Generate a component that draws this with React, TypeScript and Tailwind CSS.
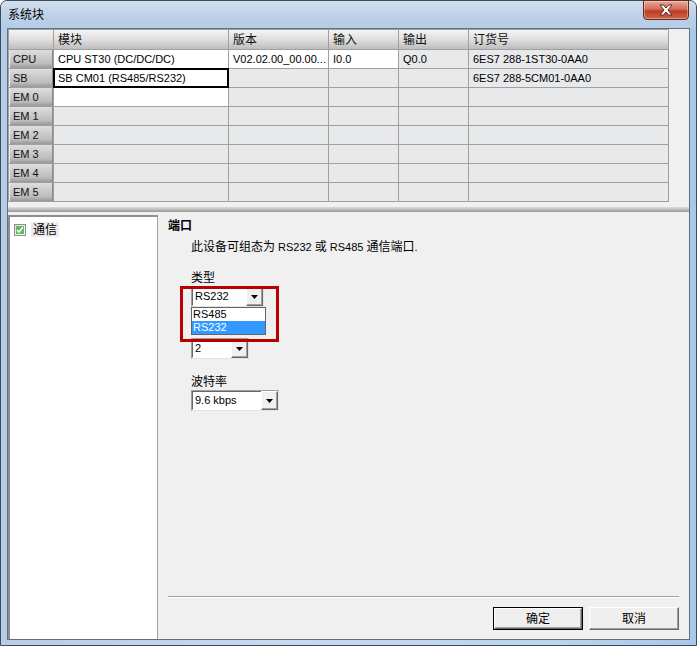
import React from "react";

const FONT = "font-['Liberation_Sans','Noto_Sans_CJK_SC',sans-serif]";

// CJK text is a little larger than the latin UI font
function Z({ children, className = "" }: { children: React.ReactNode; className?: string }) {
  return <span className={`text-[12px] ${className}`}>{children}</span>;
}

const COLS = ["模块", "版本", "输入", "输出", "订货号"];

type Row = { head: string; cells: string[]; white: boolean[]; selected?: number };

const ROWS: Row[] = [
  {
    head: "CPU",
    cells: ["CPU ST30 (DC/DC/DC)", "V02.02.00_00.00...", "I0.0", "Q0.0", "6ES7 288-1ST30-0AA0"],
    white: [true, true, true, false, false],
  },
  {
    head: "SB",
    cells: ["SB CM01 (RS485/RS232)", "", "", "", "6ES7 288-5CM01-0AA0"],
    white: [true, false, false, false, false],
    selected: 0,
  },
  { head: "EM 0", cells: ["", "", "", "", ""], white: [true, false, false, false, false] },
  { head: "EM 1", cells: ["", "", "", "", ""], white: [false, false, false, false, false] },
  { head: "EM 2", cells: ["", "", "", "", ""], white: [false, false, false, false, false] },
  { head: "EM 3", cells: ["", "", "", "", ""], white: [false, false, false, false, false] },
  { head: "EM 4", cells: ["", "", "", "", ""], white: [false, false, false, false, false] },
  { head: "EM 5", cells: ["", "", "", "", ""], white: [false, false, false, false, false] },
];

function ModuleTable() {
  return (
    <div className="grid grid-cols-[44px_174px_99px_69px_69px_199px] gap-px bg-[#a0a0a0] p-px w-[661px]">
      <div className="h-[19px] bg-[linear-gradient(#f4f4f4,#dcdcdc_55%,#bdbdbd)]" />
      {COLS.map((c) => (
        <div
          key={c}
          className="h-[19px] flex items-center pl-[4px] bg-[linear-gradient(#f4f4f4,#dcdcdc_55%,#bdbdbd)] text-[#111]"
        >
          <Z>{c}</Z>
        </div>
      ))}
      {ROWS.map((r) => (
        <React.Fragment key={r.head}>
          <div className="h-[18px] flex items-center pl-[4px] bg-[linear-gradient(#dedede,#c9c9c9_45%,#bdbdbd_75%,#989898)] shadow-[inset_1px_0_0_#ececec,inset_-1px_0_0_#8a8a8a] text-[11px] text-[#111]">
            {r.head}
          </div>
          {r.cells.map((c, i) => (
            <div
              key={i}
              className={`h-[18px] flex items-center pl-[4px] text-[11px] text-black whitespace-nowrap overflow-hidden ${
                r.white[i] ? "bg-white" : "bg-[#e8e9eb]"
              } ${r.selected === i ? "outline-1 outline-black shadow-[inset_0_0_0_1px_#000] relative" : ""}`}
            >
              {c}
            </div>
          ))}
        </React.Fragment>
      ))}
    </div>
  );
}

function Arrow() {
  return (
    <svg width="7" height="4" viewBox="0 0 7 4">
      <path d="M0 0h7L3.5 4z" fill="#000" />
    </svg>
  );
}

function Combo({ value, w }: { value: string; w: string }) {
  return (
    <div className={`${w} h-[21px] flex bg-white border border-t-[#a0a0a0] border-l-[#a0a0a0] border-r-[#e3e3e3] border-b-[#e3e3e3]`}>
      <div className="flex-1 flex items-center pl-[2px] border border-t-[#696969] border-l-[#696969] border-r-white border-b-white border-r-0 text-[11px] text-black">
        {value}
      </div>
      <div className="w-[17px] flex items-center justify-center bg-[#f0f0f0] border border-t-white border-l-white border-r-[#696969] border-b-[#696969] shadow-[inset_-1px_-1px_0_#a0a0a0]">
        <Arrow />
      </div>
    </div>
  );
}

function Btn({ label, def }: { label: string; def?: boolean }) {
  return (
    <div className={`w-[90px] h-[23px] ${def ? "border border-black" : ""}`}>
      <div className="w-full h-full flex items-center justify-center bg-[#efefef] border border-t-white border-l-white border-r-[#696969] border-b-[#696969] shadow-[inset_-1px_-1px_0_#a0a0a0] text-black">
        <Z>{label}</Z>
      </div>
    </div>
  );
}

function CloseIcon() {
  return (
    <svg width="16" height="12" viewBox="0 0 16 12">
      <path
        d="M2 1h3.5L8 4l2.5-3H14l-4 5 4 5h-3.5L8 8l-2.5 3H2l4-5z"
        fill="#fff"
        stroke="#5b2a24"
        strokeWidth="1"
        strokeLinejoin="round"
      />
    </svg>
  );
}

export default function App() {
  return (
    <div className={`w-[697px] h-[646px] bg-white overflow-hidden ${FONT}`}>
      <div className="relative w-full h-full flex flex-col rounded-t-[7px] border border-[#384b60] bg-[linear-gradient(90deg,#b7cde5,#c7daee_40%,#bcd4ee_80%,#a9c7e8)]">
        {/* title bar */}
        <div className="h-[27px] flex items-center pl-[7px] bg-[linear-gradient(#d2dfec,#bcd0e6_60%,#b4cde8)] rounded-t-[6px]">
          <Z className="text-black">系统块</Z>
        </div>
        <div className="absolute right-[7px] top-[-1px] w-[46px] h-[20px] rounded-b-[4px] border border-[#5e2a22] bg-[linear-gradient(#eaa798,#d36f5a_45%,#bf3b22_55%,#d1664b)] shadow-[inset_0_0_0_1px_rgba(255,255,255,0.35)] flex items-center justify-center">
          <CloseIcon />
        </div>

        {/* client */}
        <div className="mx-[6px] h-[612px] border border-[#61707f] bg-[#f0f0f0] flex flex-col">
          <ModuleTable />
          <div className="h-[5px]" />
          <div className="h-[5px] bg-[linear-gradient(#dcdcdc,#bdbdbd_50%,#969696)]" />
          <div className="flex-1 flex pt-[3px]">
            {/* tree */}
            <div className="w-[150px] bg-white border-l-2 border-t-2 border-l-[#8e8e8e] border-t-[#8e8e8e] border-r border-r-[#a0a0a0] pt-[5px] pl-[4px]">
              <div className="flex items-center gap-[5px]">
                <div className="w-[12px] h-[12px] border border-[#8f8f8f] bg-[linear-gradient(135deg,#dcdcdc,#ffffff)] flex items-center justify-center">
                  <div className="w-[8px] h-[8px] bg-[#5fba5a] flex items-center justify-center">
                    <svg width="8" height="8" viewBox="0 0 8 8">
                      <path d="M1 4l2 2 4-5" stroke="#fff" strokeWidth="1.6" fill="none" />
                    </svg>
                  </div>
                </div>
                <div className="px-[2px] h-[15px] flex items-center bg-[#ececec] text-black">
                  <Z>通信</Z>
                </div>
              </div>
            </div>

            {/* right panel */}
            <div className="flex-1 flex flex-col pl-[10px] pr-[10px] pt-[2px] pb-[9px] relative">
              <div className="leading-[16px] font-bold text-black">
                <Z>端口</Z>
              </div>
              <div className="pl-[23px] flex flex-col">
                <div className="mt-[5px] leading-[16px] text-black text-[11px]">
                  <Z>此设备可组态为</Z> RS232 <Z>或</Z> RS485 <Z>通信端口</Z>.
                </div>
                <div className="mt-[14px] leading-[16px] text-black">
                  <Z>类型</Z>
                </div>
                <div className="relative z-10">
                  <Combo value="RS232" w="w-[73px]" />
                  <div className="absolute left-0 top-[21px] w-[75px] border border-[#646464] bg-white text-[11px] leading-[13px] text-black">
                    <div className="pl-[1px]">RS485</div>
                    <div className="pl-[1px] bg-[#3399ff] text-white">RS232</div>
                  </div>
                  {/* highlight box */}
                  <div className="absolute left-[-11px] top-[0px] w-[99px] h-[56px] border-[3px] border-[#b80000]" />
                </div>
                <div className="mt-[31px]">
                  <Combo value="2" w="w-[58px]" />
                </div>
                <div className="mt-[14px] leading-[16px] text-black">
                  <Z>波特率</Z>
                </div>
                <Combo value="9.6 kbps" w="w-[88px]" />
              </div>

              <div className="flex-1" />
              <div className="h-[2px] border-t border-t-[#a0a0a0] border-b border-b-white" />
              <div className="mt-[9px] flex justify-end gap-[6px]">
                <Btn label="确定" def />
                <Btn label="取消" />
              </div>
            </div>
          </div>
        </div>
      </div>
    </div>
  );
}
